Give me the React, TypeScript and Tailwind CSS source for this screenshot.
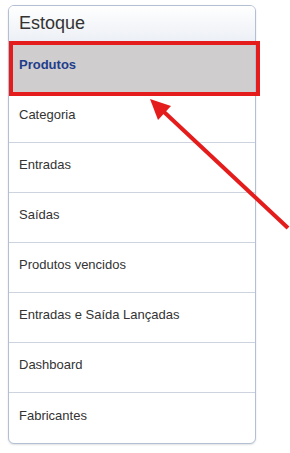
import React from 'react';

const items = [
  'Categoria',
  'Entradas',
  'Saídas',
  'Produtos vencidos',
  'Entradas e Saída Lançadas',
  'Dashboard',
  'Fabricantes',
];

export default function App() {
  return (
    <div
      className="relative w-[290px] h-[453px] bg-white pt-[5px] pl-[8px]"
      style={{ fontFamily: '"Liberation Sans", Arial, sans-serif' }}
    >
      <div className="w-[248px] border border-[#b3bfd3] rounded-[6px] overflow-hidden bg-white shadow-[0_1px_2px_rgba(0,0,0,0.12)]">
        <div className="h-[37px] flex items-center px-[10px] pb-[1px] text-[18px] text-[#333] border-b border-[#c9d1de] bg-gradient-to-b from-white to-[#eceff5]">
          Estoque
        </div>
        <div className="h-[50px] flex items-center px-[10px] pb-[6px] text-[13px] font-bold text-[#1e3d8c] bg-[#cfcdcd] border-b border-[#cdd3df]">
          Produtos
        </div>
        {items.map((label, i) => (
          <div
            key={label}
            className={
              i < items.length - 1
                ? 'h-[50px] flex items-center px-[10px] pb-[5px] text-[13px] text-[#333] border-b border-[#cdd3df]'
                : 'h-[50px] flex items-center px-[10px] pb-[5px] text-[13px] text-[#333]'
            }
          >
            {label}
          </div>
        ))}
      </div>

      {/* annotation: highlight box */}
      <div className="absolute left-[9px] top-[41px] w-[251px] h-[55px] border-4 border-[#e41c1c]" />

      {/* annotation: arrow */}
      <svg className="absolute left-0 top-0" width="290" height="453" viewBox="0 0 290 453">
        <line x1="288" y1="228" x2="163" y2="111" stroke="#e41c1c" strokeWidth="4" />
        <polygon points="150,99 171,106 158,120" fill="#e41c1c" />
      </svg>
    </div>
  );
}
